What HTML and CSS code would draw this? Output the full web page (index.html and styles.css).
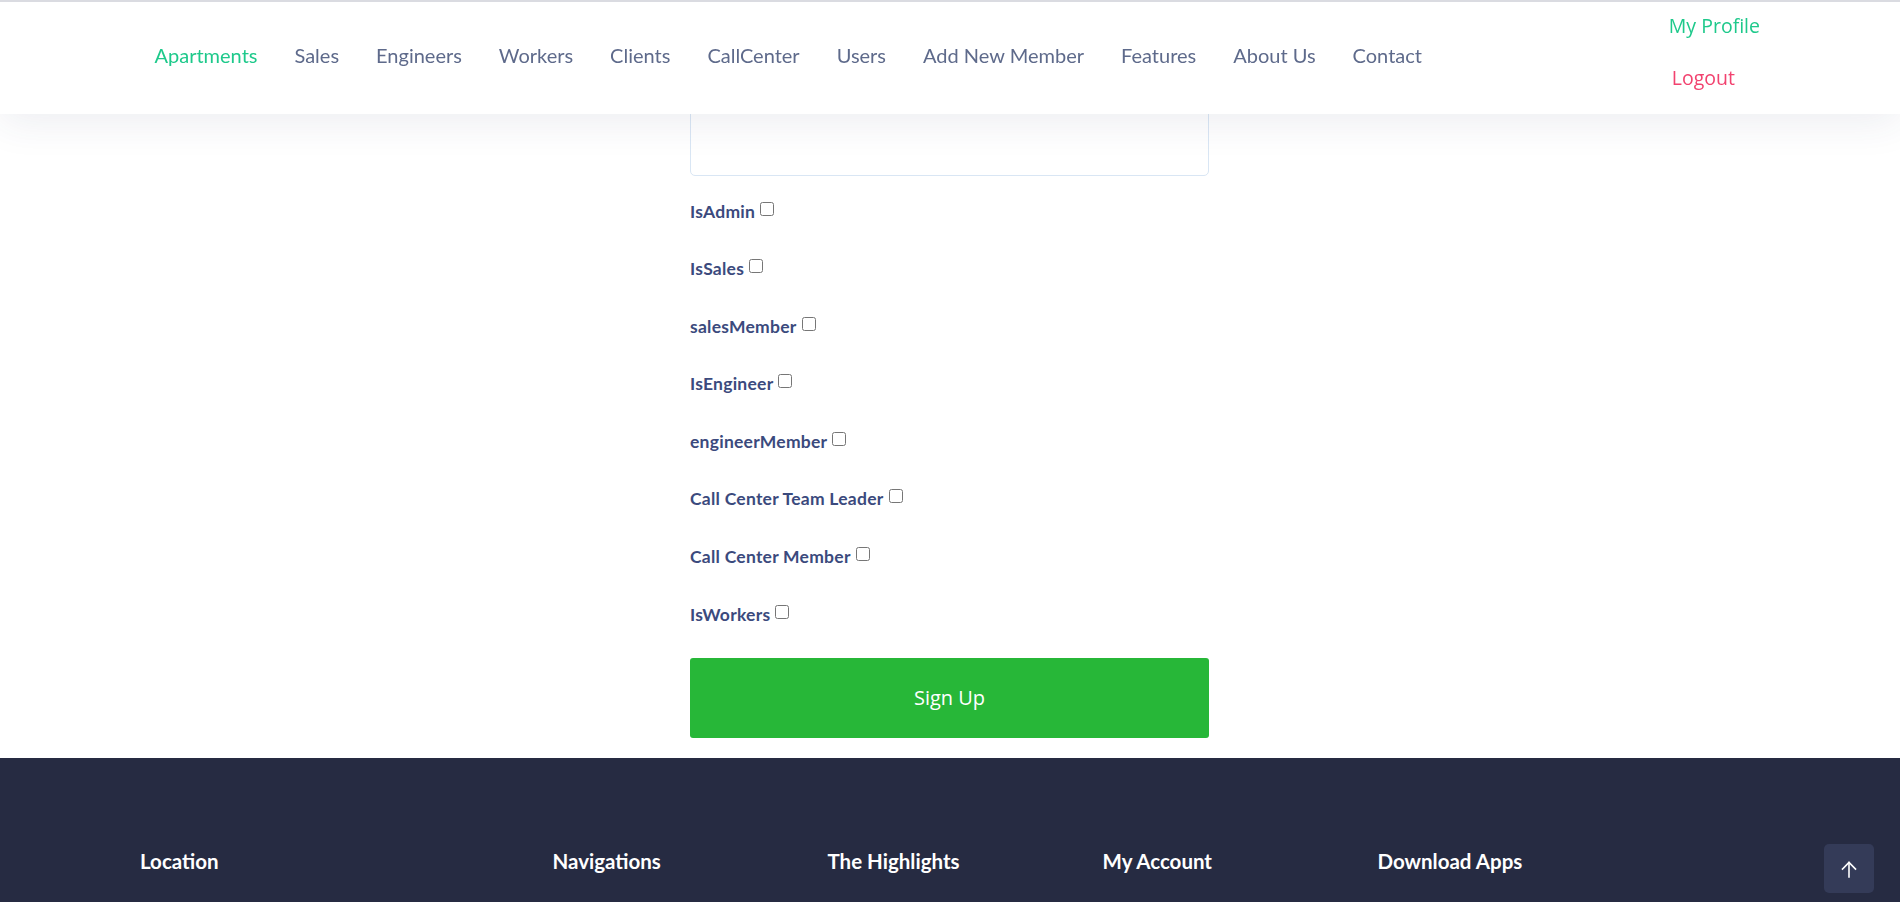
FILE: index.html
```html
<!DOCTYPE html>
<html lang="en">
<head>
<meta charset="utf-8">
<title>Add New Member</title>
<link rel="stylesheet" href="styles.css">
</head>
<body>
<header class="site-header">
  <nav class="main-nav">
    <a class="nav-link active" href="#">Apartments</a>
    <a class="nav-link" href="#">Sales</a>
    <a class="nav-link" href="#">Engineers</a>
    <a class="nav-link" href="#">Workers</a>
    <a class="nav-link" href="#">Clients</a>
    <a class="nav-link" href="#">CallCenter</a>
    <a class="nav-link" href="#">Users</a>
    <a class="nav-link" href="#">Add New Member</a>
    <a class="nav-link" href="#">Features</a>
    <a class="nav-link" href="#">About Us</a>
    <a class="nav-link" href="#">Contact</a>
  </nav>
  <div class="account-links">
    <a class="profile-link" href="#">My Profile</a>
    <a class="logout-link" href="#">Logout</a>
  </div>
</header>

<main class="page">
  <form class="member-form">
    <textarea class="form-textarea"></textarea>
    <div class="check-list">
      <label class="check-row">IsAdmin<input type="checkbox"></label>
      <label class="check-row">IsSales<input type="checkbox"></label>
      <label class="check-row">salesMember<input type="checkbox"></label>
      <label class="check-row">IsEngineer<input type="checkbox"></label>
      <label class="check-row">engineerMember<input type="checkbox"></label>
      <label class="check-row">Call Center Team Leader<input type="checkbox"></label>
      <label class="check-row">Call Center Member<input type="checkbox"></label>
      <label class="check-row">IsWorkers<input type="checkbox"></label>
    </div>
    <button class="submit-btn" type="button">Sign Up</button>
  </form>
</main>

<footer class="site-footer">
  <div class="footer-grid">
    <div class="footer-col wide"><h4 class="footer-title">Location</h4></div>
    <div class="footer-col"><h4 class="footer-title">Navigations</h4></div>
    <div class="footer-col"><h4 class="footer-title">The Highlights</h4></div>
    <div class="footer-col"><h4 class="footer-title">My Account</h4></div>
    <div class="footer-col wide"><h4 class="footer-title">Download Apps</h4></div>
  </div>
</footer>

<a class="back-to-top" href="#" aria-label="Back to top">
  <svg width="18" height="18" viewBox="0 0 18 18" fill="none" stroke="#ffffff" stroke-width="1.6" stroke-linecap="square">
    <path d="M9 2.5 V17"/>
    <path d="M2.5 9 L9 2.5 L15.5 9"/>
  </svg>
</a>
</body>
</html>
```

FILE: styles.css
```css
html, body {
  margin: 0;
  padding: 0;
}
html {
  overflow: hidden;
}
body {
  font-family: "Lato", "Liberation Sans", sans-serif;
  background: #ffffff;
  color: #3a4a7c;
}

/* Header */
.site-header {
  position: fixed;
  top: 0;
  left: 0;
  right: 0;
  height: 112px;
  border-top: 2px solid #dadbe1;
  background: #ffffff;
  box-shadow: 0 8px 40px rgba(40, 55, 100, 0.09);
  display: flex;
  align-items: flex-start;
  z-index: 10;
}
.main-nav {
  display: flex;
  padding-left: 136px;
  padding-top: 41px;
}
.nav-link {
  font-family: "Lato", sans-serif;
  font-size: 20px;
  line-height: 24px;
  color: #5e6a8b;
  text-decoration: none;
  padding: 0 18.5px;
}
.nav-link.active {
  color: #1ec98b;
}
.account-links {
  margin-left: auto;
  margin-right: 140px;
  display: flex;
  flex-direction: column;
  padding-top: 10px;
}
.profile-link,
.logout-link {
  font-family: "Open Sans", sans-serif;
  font-size: 19.5px;
  line-height: 28px;
  text-decoration: none;
}
.profile-link {
  color: #1ec98b;
}
.logout-link {
  color: #f2426f;
  margin-top: 24px;
  padding-left: 3px;
}

/* Main form */
.page {
  display: flex;
  justify-content: center;
  padding-bottom: 20px;
}
.member-form {
  width: 519px;
  margin-left: -1px;
  display: flex;
  flex-direction: column;
}
.form-textarea {
  display: block;
  margin-top: 40px;
  height: 136px;
  box-sizing: border-box;
  width: 100%;
  border: 1px solid #d9e6f4;
  border-radius: 5px;
  resize: none;
  background: #ffffff;
}
.check-list {
  display: flex;
  flex-direction: column;
  gap: 33.6px;
  margin-top: 23.5px;
}
.check-row {
  display: flex;
  align-items: flex-start;
  font-family: "Lato", sans-serif;
  font-weight: 700;
  font-size: 17.5px;
  letter-spacing: 0.25px;
  line-height: 24px;
  color: #3b4a7d;
}
.check-row input {
  width: 14px;
  height: 14px;
  margin: 2px 0 0 5px;
}
.submit-btn {
  margin-top: 31px;
  height: 80px;
  width: 100%;
  border: none;
  border-radius: 3px;
  background: #27b738;
  color: #ffffff;
  font-family: "Open Sans", sans-serif;
  font-size: 20px;
  cursor: pointer;
}

/* Footer */
.site-footer {
  background: #262b42;
  padding: 89px 0 80px;
}
.footer-grid {
  width: 1650px;
  margin: 0 auto;
  display: grid;
  grid-template-columns: 3fr 2fr 2fr 2fr 3fr;
}
.footer-col {
  padding-left: 15px;
}
.footer-title {
  margin: 0;
  font-family: "Lato", sans-serif;
  font-weight: 700;
  font-size: 20.5px;
  line-height: 28px;
  color: #ffffff;
}

.back-to-top {
  position: fixed;
  right: 26px;
  bottom: 9px;
  width: 50px;
  height: 49px;
  border-radius: 5px;
  background: #343b58;
  display: flex;
  align-items: center;
  justify-content: center;
}
```
